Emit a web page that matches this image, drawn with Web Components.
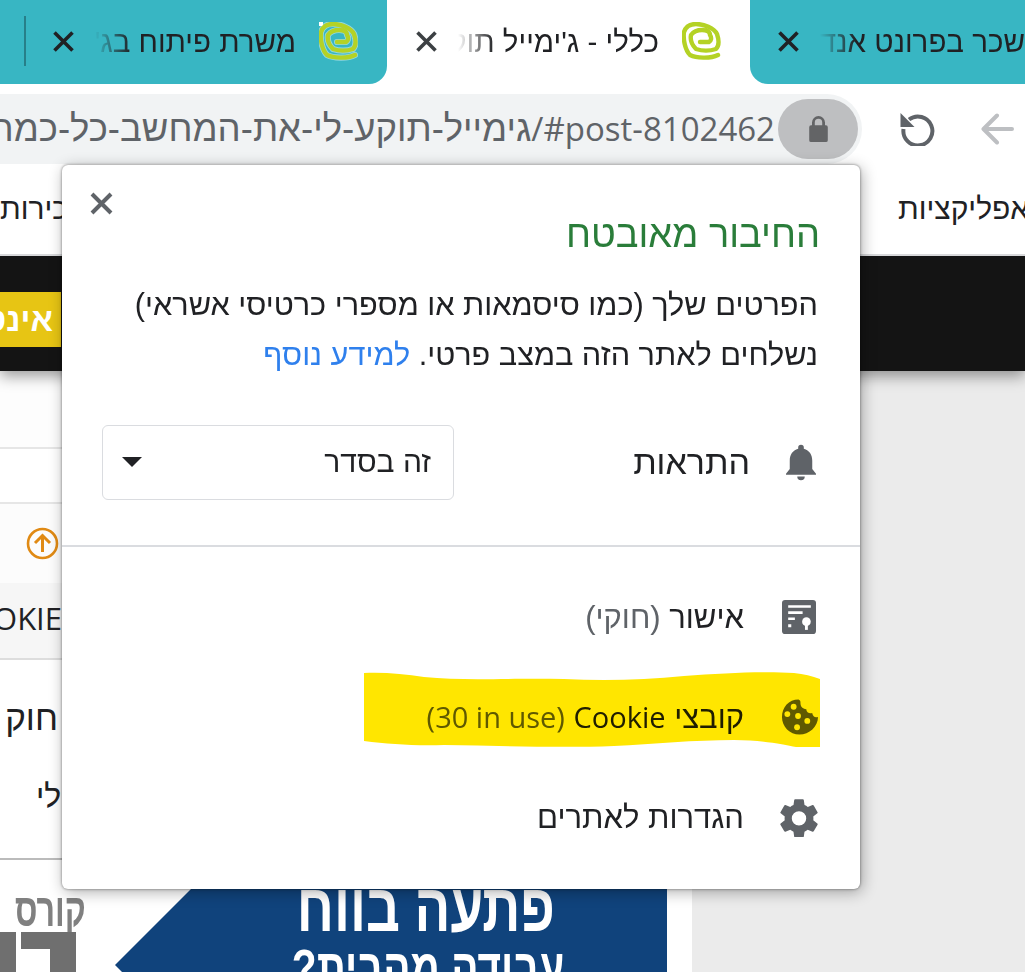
<!DOCTYPE html>
<html lang="he"><head><meta charset="utf-8">
<style>
html,body{margin:0;padding:0;height:972px;overflow:hidden;background:#fff}
body{font-family:"Liberation Sans",sans-serif;color:#202124;width:1025px}
</style>
</head><body>
<template id="t-tabs"><style>
:host{display:flex;height:84px;background:#fff;font:29.500px/1 "Liberation Sans",sans-serif;overflow:hidden}
</style><slot></slot></template>
<template id="t-tab"><style>
:host{display:flex;align-items:center;box-sizing:border-box;height:84px;background:#38b6c3;color:#202124;flex:none;padding-left:var(--pl);padding-right:var(--pr,0)}
:host([active]){background:#fff;border-radius:18px 18px 0 0}
:host([corner=br]){border-bottom-right-radius:18px}
:host([corner=bl]){border-bottom-left-radius:18px}
.t{display:block;width:var(--w);margin:0 var(--mr,23px) 0 21px;white-space:nowrap;overflow:hidden;direction:rtl;flex:none;-webkit-mask-image:linear-gradient(to right,transparent 0,#000 36px);mask-image:linear-gradient(to right,transparent 0,#000 36px);line-height:40px}
</style><slot name="sep"></slot><slot name="x"></slot><span class="t"><slot></slot></span><slot name="fav"></slot></template>

<chrome-tabs>
  <chrome-tab corner="br" style="--pl:24px;--w:201px;--pr:29px;width:387px">
    <tab-sep slot="sep"></tab-sep><chrome-x slot="x"></chrome-x>משרת פיתוח בג'ימייל<g-fav slot="fav" chip></g-fav>
  </chrome-tab>
  <chrome-tab active style="--pl:29px;--w:201px;--pr:30px;width:363px">
    <chrome-x slot="x" light></chrome-x>כללי - ג'ימייל תוקע לי<g-fav slot="fav"></g-fav>
  </chrome-tab>
  <chrome-tab corner="bl" style="--pl:28px;--w:205px;--mr:0;width:275px">
    <chrome-x slot="x"></chrome-x>שכר בפרונט אנד ובאק
  </chrome-tab>
</chrome-tabs>
<chrome-toolbar></chrome-toolbar>
<chrome-bookmarks></chrome-bookmarks>
<site-page></site-page>
<site-info-popup></site-info-popup>

<script>
const FONT='"Liberation Sans",sans-serif', LAT='"Open Sans",sans-serif';
function tpl(id){return document.getElementById(id).content.cloneNode(true)}
class ChromeTabs extends HTMLElement{constructor(){super();this.attachShadow({mode:'open'}).append(tpl('t-tabs'))}}
class ChromeTab extends HTMLElement{constructor(){super();this.attachShadow({mode:'open'}).append(tpl('t-tab'))}}
class TabSep extends HTMLElement{constructor(){super();this.attachShadow({mode:'open'}).innerHTML=`<style>:host{display:block;flex:none;width:2px;height:50px;margin-right:27px;margin-top:-2px;background:#277f89}</style>`}}
class ChromeX extends HTMLElement{constructor(){super();this.attachShadow({mode:'open'}).innerHTML=`<style>:host{display:block;flex:none;width:21px;height:21px;margin-top:-2px}:host([light]){--x:#3c4043}svg{display:block}</style><svg width="21" height="21" viewBox="0 0 21 21"><path d="M1.500 1.500L19.500 19.500M19.500 1.500L1.500 19.500" stroke="var(--x,#202124)" stroke-width="3.600" fill="none"/></svg>`}}
class GFav extends HTMLElement{constructor(){super();const d="M36 33C28 37 14 36 8 33C3 28 1 17 2 10C4 4 9 2 14 2C22 2 32 6 35 12C37 18 37 24 34 27C28 29 20 29 14 27C10 23 8 18 9 13C12 9 16 8 20 8C25 8 28 10 28 13C30 16 29 19 27 20L18 20";
this.attachShadow({mode:'open'}).innerHTML=`<style>:host{display:block;flex:none;width:39px;height:39px;margin-top:-2px}svg{display:block}rect{display:none}:host([chip]) rect{display:block}</style><svg width="39" height="39" viewBox="0 0 39 39"><rect x="0" y="0" width="4" height="4" fill="#fff"/><path d="${d}" fill="none" stroke="#fff" stroke-opacity=".45" stroke-width="6.200" stroke-linecap="round" stroke-linejoin="round"/><path d="${d}" fill="none" stroke="#b4d225" stroke-width="4.400" stroke-linecap="round" stroke-linejoin="round"/></svg>`}}
class ChromeToolbar extends HTMLElement{constructor(){super();this.attachShadow({mode:'open'}).innerHTML=`<style>
:host{display:flex;height:70px;margin-top:10px;background:#fff;font:36.500px/1 ${FONT}}
.omni{width:862px;flex:none;box-sizing:border-box;height:70px;background:#f1f3f4;border-radius:0 35px 35px 0;display:flex;align-items:center;padding-right:4px;overflow:hidden}
.url{flex:1;min-width:0;overflow:hidden;white-space:nowrap;color:#5f6368;direction:ltr;display:flex;justify-content:flex-end;padding-right:3px;margin-top:-1px;line-height:44px}
.url>span{flex:none}
.lat{font-family:${LAT};font-size:33px}
.pill{flex:none;width:80px;height:60px;border-radius:30px;background:#bebfc1;display:flex;align-items:center;justify-content:center}
.nav{flex:1;display:flex;align-items:center;padding-left:38px;gap:46px}
svg{display:block;flex:none}
</style>
<div class="omni"><div class="url"><span dir="ltr"><span dir="rtl">גימייל-תוקע-לי-את-המחשב-כל-כמה</span><span class="lat">/#post-8102462</span></span></div>
<div class="pill"><svg width="21" height="26" viewBox="0 0 22 28"><path d="M3 28a2 2 0 0 1-2-2V12a2 2 0 0 1 2-2h1V7a7 7 0 0 1 14 0v3h1a2 2 0 0 1 2 2v14a2 2 0 0 1-2 2zM7 10h8V7a4 4 0 0 0-8 0z" fill="#636466"/></svg></div></div>
<div class="nav">
<svg width="35" height="34" viewBox="0 0 35 34"><path d="M9 7.500A14.500 14.500 0 1 1 3.500 17" fill="none" stroke="#5f6368" stroke-width="4"/><path d="M0.500 1V15H14.500Z" fill="#5f6368"/></svg>
<svg width="33" height="32" viewBox="0 0 33 32"><path d="M16 2.500L2.500 16L16 29.500M3 16H31" fill="none" stroke="#bdbfc2" stroke-width="4" stroke-linecap="round" stroke-linejoin="round"/></svg>
</div>`}}
class ChromeBookmarks extends HTMLElement{constructor(){super();this.attachShadow({mode:'open'}).innerHTML=`<style>
:host{display:flex;height:92px;box-sizing:border-box;align-items:center;justify-content:space-between;background:#fff;border-bottom:2px solid #d8d9db;font:30px/1 ${FONT};color:#202124;overflow:hidden;padding-top:0}
.l,.r{display:flex;overflow:hidden;white-space:nowrap;direction:ltr;justify-content:flex-start;height:40px;line-height:40px}
span{flex:none;display:block}
.l{width:62px}
.r{width:127px}
</style><div class="l"><span dir="rtl">היכירות</span></div><div class="r"><span dir="rtl">אפליקציות</span></div>`}}
class SitePage extends HTMLElement{constructor(){super();this.attachShadow({mode:'open'}).innerHTML=`<style>
:host{display:block;height:716px;background:#ebebeb;overflow:hidden;font:29px/1 ${FONT};color:#202124}
.black{height:115px;background:#141414;display:flex;align-items:flex-start;box-shadow:0 5px 14px rgba(0,0,0,.4);position:relative;z-index:1}
.btn{width:61px;box-sizing:border-box;height:55px;margin-top:36px;background:#e7c514;color:#fff;font-weight:700;font-size:33px;overflow:hidden;display:flex;align-items:center;justify-content:flex-end;padding-right:8px;white-space:nowrap}
.btn span{flex:none}
.col{width:692px;background:#fff;height:601px;display:flex;flex-direction:column}
.sp1{height:78px;border-bottom:2px solid #e6e6e6;box-sizing:border-box;flex:none;background:#fdfdfd}
.sp2{height:55px;border-bottom:2px solid #e6e6e6;box-sizing:border-box;flex:none}
.head{height:156px;flex:none;box-sizing:border-box;border-bottom:2px solid #ddd;background:linear-gradient(#fcfcfc 0,#fcfcfc 79px,#f6f6f6 79px);display:flex;flex-direction:column;align-items:flex-start}
.up{margin:23px 0 0 26px;display:block}
.okie{font-family:${LAT};font-size:31px;margin-top:38px;height:40px;line-height:40px;width:62px;overflow:hidden;display:flex;justify-content:flex-end;white-space:nowrap}
.rows{height:200px;flex:none;box-sizing:border-box;border-bottom:2px solid #bbb;display:flex;flex-direction:column;align-items:flex-start}
.a{font-size:35px;margin-top:38px;height:40px;line-height:40px;width:58px;overflow:hidden;display:flex;justify-content:flex-end;white-space:nowrap}
.b{font-size:32px;margin-top:38px;height:40px;line-height:40px;width:62px;padding-left:36px;box-sizing:border-box;overflow:hidden;white-space:nowrap}
.ban{flex:1;position:relative;overflow:hidden;font-family:${FONT}}
.course{position:absolute;left:15px;top:27px;font-weight:700;font-size:46px;line-height:46px;color:#808080;transform:scaleX(.7);transform-origin:left top;white-space:nowrap}
.blk{position:absolute;background:#6f6f6f}
svg.b2{position:absolute;left:115px;top:0;display:block}
.bt{position:absolute;color:#fff;font-weight:700;white-space:nowrap;filter:blur(.7px);transform-origin:right top}
</style>
<div class="black"><div class="btn"><span dir="rtl">אינטרנט</span></div></div>
<div class="col">
<div class="sp1"></div>
<div class="sp2"></div>
<div class="head"><svg class="up" width="33" height="33" viewBox="0 0 33 33"><circle cx="16.500" cy="16.500" r="14.500" fill="none" stroke="#e08a14" stroke-width="2.600"/><path d="M16.500 25V9M9 16L16.500 8.500L24 16" fill="none" stroke="#e08a14" stroke-width="3"/></svg><div class="okie">COOKIE</div></div>
<div class="rows"><div class="a"><span dir="rtl">חוק</span></div><div class="b"><span dir="rtl">לי</span></div></div>
<div class="ban"><div class="course">קורס</div><i class="blk" style="left:0;top:72px;width:16px;height:40px"></i><i class="blk" style="left:21px;top:72px;width:55px;height:17px"></i><i class="blk" style="left:50px;top:72px;width:26px;height:40px"></i>
<svg class="b2" width="552" height="112" viewBox="0 0 552 112"><path d="M105 0H552V112H7L0 105Z" fill="#10437c"/></svg>
<div class="bt" dir="rtl" style="top:11px;right:137px;font-size:68px;line-height:72px;transform:scaleX(.78)">פתעה בווח</div>
<div class="bt" dir="rtl" style="top:78px;right:128px;font-size:52px;line-height:60px;transform:scaleX(.78)">עבודה מהבית?</div>
</div>
</div>`}}
class SiteInfoPopup extends HTMLElement{constructor(){super();this.attachShadow({mode:'open'}).innerHTML=`<style>
:host{position:absolute;z-index:10;left:62px;top:165px;width:798px;height:724px;box-sizing:border-box;background:#fff;border-radius:6px;box-shadow:0 0 3px rgba(0,0,0,.5),2px 3px 15px rgba(0,0,0,.32);font:31px/1 ${FONT};color:#202124;display:flex;flex-direction:column;direction:rtl}
.top{box-sizing:border-box;height:382px;padding:0 40px;border-bottom:2px solid #dadce0;position:relative;display:flex;flex-direction:column;flex:none}
.close{position:absolute;left:28px;top:27px}
h1{font:400 38px/40px ${FONT};color:#2a7d3a;margin:49px 0 0}
p{margin:26px 2px 0 0;line-height:50px;font-size:30.700px}
a{color:#2f80ed;text-decoration:none}
.perm{display:flex;align-items:center;justify-content:space-between;margin-top:44px;height:76px}
.lab{display:flex;align-items:center;gap:31px;margin-right:-1px;font-size:34px}
.ic{display:flex;justify-content:center;width:40px;flex:none}
.sel{box-sizing:border-box;width:352px;height:75px;border:1.500px solid #dadce0;border-radius:6px;display:flex;align-items:center;justify-content:space-between;padding:0 22px 0 19px;font-size:30px}
.sel i{display:block;width:0;height:0;border:10px solid transparent;border-top:10px solid #202124;border-bottom:0}
.rows{flex:1;display:flex;flex-direction:column;padding-top:20px;position:relative}
.row{height:100px;flex:none;display:flex;align-items:center;padding-right:41px;gap:35px}
svg{flex:none;display:block}
.g{color:#5f6368}
.lat{font-family:${LAT};font-size:29px}
bdi{unicode-bidi:isolate}
.hl{position:absolute;left:302px;top:124px;mix-blend-mode:multiply;pointer-events:none}
</style>
<div class="top"><svg class="close" width="23" height="23" viewBox="0 0 23 23"><path d="M2 2L21 21M21 2L2 21" stroke="#5f6368" stroke-width="4" fill="none"/></svg>
<h1>החיבור מאובטח</h1>
<p>הפרטים שלך (כמו סיסמאות או מספרי כרטיסי אשראי)<br>נשלחים לאתר הזה במצב פרטי. <a>למידע נוסף</a></p>
<div class="perm"><div class="lab"><span class="ic"><svg width="30" height="37" viewBox="0 0 32 38"><path d="M16 0a3 3 0 0 1 3 3v1.400C25 6 28 11 28 17v9l4 5v1H0v-1l4-5v-9C4 11 7 6 13 4.400V3a3 3 0 0 1 3-3zM12 34h8a4 4 0 0 1-8 0z" fill="#5f6368"/></svg></span><span>התראות</span></div>
<div class="sel"><span>זה בסדר</span><i></i></div></div></div>
<div class="rows">
<div class="row"><span class="ic"><svg width="34" height="34" viewBox="0 0 33 33"><rect width="33" height="33" rx="3" fill="#5f6368"/><path d="M6 5h22v2.500H6zM6 11h14v2.500H6zM6 17h6.500v2.500H6zM6 23.500h3V26.500H6z" fill="#fff"/><circle cx="23.700" cy="21" r="4.200" fill="#fff"/><rect x="22.300" y="23" width="2.800" height="6" fill="#fff"/></svg></span><span>אישור <span class="g">(חוקי)</span></span></div>
<div class="row"><span class="ic"><svg width="37" height="38" viewBox="0 0 38 38"><path d="M18 1C8 1 1 9 1 19s8 18 18 18 19-8 19-18c-3 1-5 0-6-4-3 1-6-1-6-4-4 0-6-3-6-6 0-2 0-3-2-4z" fill="#5f6368"/><g fill="#fff"><circle cx="13" cy="8.500" r="3"/><circle cx="6.500" cy="16" r="3"/><circle cx="17.500" cy="18" r="3"/><circle cx="27" cy="23" r="3"/><circle cx="16.500" cy="29.500" r="3"/></g></svg></span><span>קובצי <bdi class="lat">Cookie</bdi> <bdi class="g lat">(30 in use)</bdi></span></div>
<div class="row"><span class="ic"><svg width="38" height="39" viewBox="2.500 1.800 19 19.500"><path fill="#5f6368" d="M19.140 12.940c.04-.3.06-.61.06-.94 0-.32-.02-.64-.07-.94l2.030-1.580a.49.49 0 0 0 .12-.61l-1.920-3.320a.49.49 0 0 0-.59-.22l-2.390.96c-.5-.38-1.030-.7-1.620-.94l-.36-2.540a.48.48 0 0 0-.48-.41h-3.840a.47.47 0 0 0-.47.41l-.36 2.540c-.59.24-1.130.57-1.620.94l-2.390-.96a.48.48 0 0 0-.59.22L2.740 8.870a.47.47 0 0 0 .12.61l2.030 1.580c-.05.3-.09.63-.09.94s.02.64.07.94l-2.030 1.580a.49.49 0 0 0-.12.61l1.920 3.320c.12.22.37.29.59.22l2.390-.96c.5.38 1.030.7 1.620.94l.36 2.54c.05.24.24.41.48.41h3.840c.24 0 .44-.17.47-.41l.36-2.540c.59-.24 1.130-.56 1.620-.94l2.390.96c.22.08.47 0 .59-.22l1.920-3.320a.47.47 0 0 0-.12-.61zM12 15.600A3.600 3.600 0 1 1 12 8.400a3.600 3.600 0 0 1 0 7.200z"/></svg></span><span>הגדרות לאתרים</span></div>
<svg class="hl" width="456" height="76" viewBox="0 0 456 76"><path d="M0 2C20 1 40 3 60 6C100 10 140 7 200 8C240 10 280 9 320 5C360 2 400 0 430 2C440 3 448 5 456 8V76H432C420 74 400 69 370 69C330 69 290 73 250 75C200 77 140 75 80 74C50 75 25 73 0 70Z" fill="#ffe600"/></svg>
</div>`}}
customElements.define('chrome-tabs',ChromeTabs);
customElements.define('chrome-tab',ChromeTab);
customElements.define('tab-sep',TabSep);
customElements.define('chrome-x',ChromeX);
customElements.define('g-fav',GFav);
customElements.define('chrome-toolbar',ChromeToolbar);
customElements.define('chrome-bookmarks',ChromeBookmarks);
customElements.define('site-page',SitePage);
customElements.define('site-info-popup',SiteInfoPopup);
</script>
</body></html>
